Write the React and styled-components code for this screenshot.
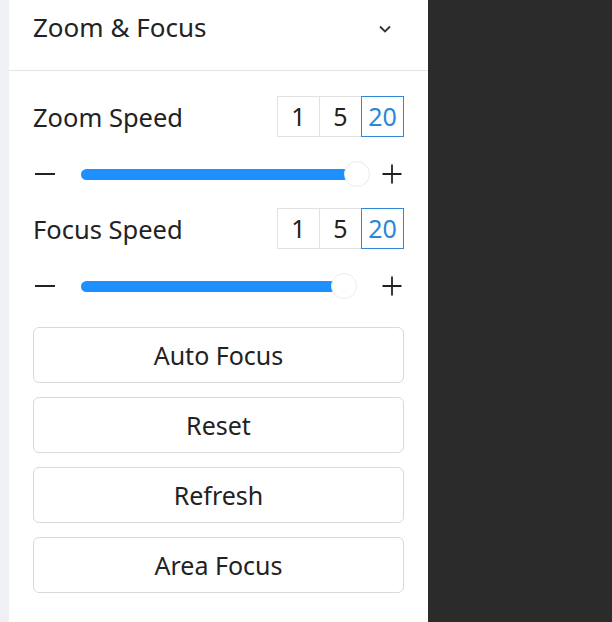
import React, { useState } from 'react';
import styled, { createGlobalStyle } from 'styled-components';

const GlobalStyle = createGlobalStyle`
  html, body {
    margin: 0;
    padding: 0;
    height: 100%;
  }
  body {
    font-family: "Noto Sans", "Open Sans", sans-serif;
    color: #222;
    background: #2b2b2b;
  }
`;

const Page = styled.div`
  display: flex;
  height: 622px;
`;

const Gutter = styled.div`
  width: 9px;
  background: #eef0f3;
`;

const Panel = styled.div`
  width: 419px;
  background: #fff;
  display: flex;
  flex-direction: column;
`;

const Viewport = styled.div`
  flex: 1;
  background: #2b2b2b;
`;

const Header = styled.div`
  height: 71px;
  display: flex;
  align-items: center;
  justify-content: space-between;
  padding: 0 37px 0 24px;
  border-bottom: 1px solid #e4e4e4;
  font-size: 26px;
  box-sizing: border-box;
`;

const Title = styled.span`
  margin-top: -16px;
`;

const Chevron = styled.svg`
  width: 12px;
  height: 8px;
  margin-top: -12px;
`;

const Body = styled.div`
  padding: 25px 24px 0;
  display: flex;
  flex-direction: column;
`;

const Section = styled.div`
  display: flex;
  flex-direction: column;
  gap: 22px;
  margin-bottom: 19px;
`;

const SpeedRow = styled.div`
  display: flex;
  align-items: center;
  justify-content: space-between;
  height: 41px;
`;

const Label = styled.span`
  font-size: 25.5px;
`;

const Segmented = styled.div`
  display: flex;
`;

const Segment = styled.button`
  width: 43px;
  height: 41px;
  margin-left: -1px;
  border: 1px solid ${p => (p.$active ? '#2f88d8' : '#e2e2e2')};
  position: ${p => (p.$active ? 'relative' : 'static')};
  background: #fff;
  color: ${p => (p.$active ? '#2b86dc' : '#222')};
  font-family: inherit;
  font-size: 25px;
  line-height: 1;
  padding: 0;
  cursor: pointer;
`;

const SliderRow = styled.div`
  display: flex;
  align-items: center;
  height: 30px;
`;

const StepIcon = styled.svg`
  width: 24px;
  height: 24px;
  flex: none;
`;

const Track = styled.div`
  flex: 1;
  margin: 0 11px 0 24px;
  height: 26px;
  position: relative;
`;

const Fill = styled.div`
  position: absolute;
  left: 0;
  top: 8px;
  height: 11px;
  border-radius: 6px;
  background: #1e8fff;
`;

const Thumb = styled.div`
  position: absolute;
  top: 0;
  width: 24px;
  height: 24px;
  margin-left: -13px;
  border-radius: 50%;
  background: #fff;
  border: 1px solid #ebebeb;
`;

const Actions = styled.div`
  display: flex;
  flex-direction: column;
  gap: 14px;
  margin-top: 7px;
`;

const ActionButton = styled.button`
  height: 56px;
  border: 1px solid #d9d9d9;
  border-radius: 6px;
  background: #fff;
  color: #222;
  font-family: inherit;
  font-size: 25px;
  cursor: pointer;
`;

const Minus = () => (
  <StepIcon viewBox="0 0 24 24">
    <path d="M2 12h20" stroke="#222" strokeWidth="2" />
  </StepIcon>
);

const Plus = () => (
  <StepIcon viewBox="0 0 24 24">
    <path d="M2.5 12h19M12 2.5v19" stroke="#222" strokeWidth="1.8" />
  </StepIcon>
);

const Slider = ({ value }) => {
  // thumb stays inside the track: centre runs from 12px to width-12px
  const pos = `calc(12px + (100% - 24px) * ${value / 100})`;
  return (
    <SliderRow>
      <Minus />
      <Track>
        <Fill style={{ width: pos }} />
        <Thumb style={{ left: pos }} />
      </Track>
      <Plus />
    </SliderRow>
  );
};

const SpeedControl = ({ label, value }) => {
  const [speed, setSpeed] = useState(20);
  return (
    <Section>
      <SpeedRow>
        <Label>{label}</Label>
        <Segmented>
          {[1, 5, 20].map(s => (
            <Segment key={s} $active={s === speed} onClick={() => setSpeed(s)}>
              {s}
            </Segment>
          ))}
        </Segmented>
      </SpeedRow>
      <Slider value={value} />
    </Section>
  );
};

export default function App() {
  return (
    <>
      <GlobalStyle />
      <Page>
        <Gutter />
        <Panel>
          <Header>
            <Title>Zoom &amp; Focus</Title>
            <Chevron viewBox="0 0 12 8">
              <path d="M1 1.5l5 5 5-5" fill="none" stroke="#333" strokeWidth="1.8" />
            </Chevron>
          </Header>
          <Body>
            <SpeedControl label="Zoom Speed" value={100} />
            <SpeedControl label="Focus Speed" value={95} />
            <Actions>
              <ActionButton>Auto Focus</ActionButton>
              <ActionButton>Reset</ActionButton>
              <ActionButton>Refresh</ActionButton>
              <ActionButton>Area Focus</ActionButton>
            </Actions>
          </Body>
        </Panel>
        <Viewport />
      </Page>
    </>
  );
}
